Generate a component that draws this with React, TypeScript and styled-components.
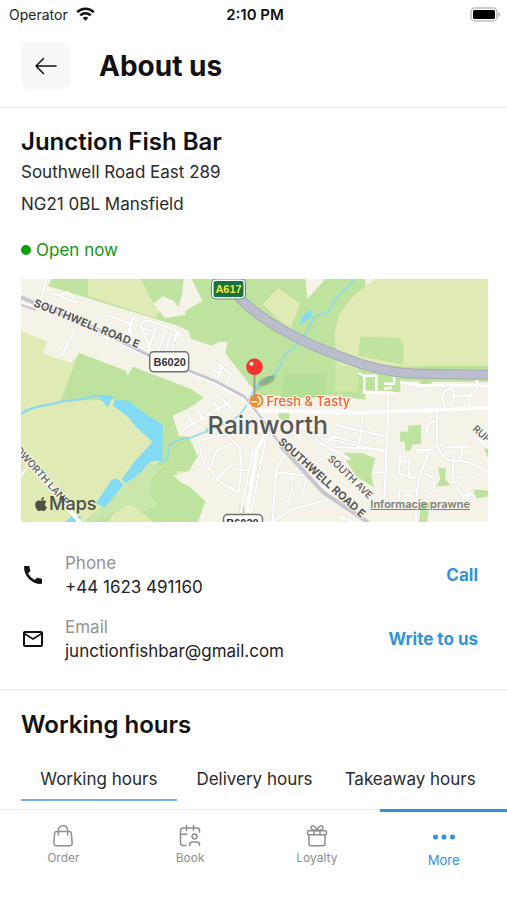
import React from "react";
import styled, { createGlobalStyle } from "styled-components";
import { MdCall, MdMailOutline } from "react-icons/md";
import { FaApple } from "react-icons/fa";

const GlobalStyle = createGlobalStyle`
  *, *::before, *::after { box-sizing: border-box; }
  body { margin: 0; background: #fff; }
  button { font: inherit; color: inherit; background: none; border: 0; padding: 0; margin: 0; cursor: pointer; }
  h1, h2, p, dl, dd, dt { margin: 0; }
`;

const blue = "#2f93dc";

const Screen = styled.div`
  min-height: 100vh;
  display: flex;
  flex-direction: column;
  background: #fff;
  color: #111;
  font-family: Inter, "Liberation Sans", sans-serif;
  font-size: 17px;
`;

const StatusBar = styled.div`
  display: grid;
  grid-template-columns: 1fr auto 1fr;
  align-items: center;
  height: 28px;
  padding: 0 6px 0 9px;
  font-size: 14px;
  color: #222;
`;

const Carrier = styled.span`
  display: flex;
  align-items: center;
  gap: 8px;
`;

const Clock = styled.span`
  font-size: 15px;
  font-weight: 600;
  color: #111;
`;

const BatteryIcon = styled.svg`
  justify-self: end;
`;

const Header = styled.header`
  display: flex;
  align-items: center;
  gap: 29px;
  height: 80px;
  padding: 0 21px 3px;
  border-bottom: 1px solid #e8e8e8;
`;

const BackButton = styled.button`
  display: grid;
  place-items: center;
  width: 49px;
  height: 48px;
  border-radius: 8px;
  background: #f8f8fb;
`;

const Title = styled.h1`
  font-size: 28px;
  line-height: 36px;
  font-weight: 700;
`;

const Section = styled.section`
  padding: 18px 19px 0 21px;
`;

const SectionTitle = styled.h2`
  font-size: 24px;
  line-height: 32px;
  font-weight: 600;
`;

const Address = styled.p`
  line-height: 32px;
  color: #2a2a2a;
  margin-top: -2px;
`;

const OpenState = styled.p`
  display: flex;
  align-items: center;
  gap: 5px;
  margin-top: 18px;
  line-height: 24px;
  color: #149414;

  &::before {
    content: "";
    width: 10px;
    height: 10px;
    border-radius: 50%;
    background: #08a008;
  }
`;

const MapFrame = styled.div`
  position: relative;
  margin-top: 17px;
`;

const MapDrawing = styled.svg`
  display: block;
  width: 100%;
  height: auto;
  font-family: Inter, sans-serif;
`;

const MapBrand = styled.span`
  position: absolute;
  left: 12px;
  bottom: 6px;
  display: flex;
  align-items: center;
  font-size: 18px;
  line-height: 24px;
  font-weight: 500;
  color: #4b5147;
`;

const LegalLink = styled.a`
  position: absolute;
  right: 18px;
  bottom: 10px;
  font-size: 11px;
  line-height: 16px;
  font-weight: 600;
  color: #80807a;
`;

const Contacts = styled.dl`
  padding: 29px 0 26px;
  display: grid;
  gap: 16px;
`;

const ContactRow = styled.div`
  display: grid;
  grid-template-columns: 24px 1fr auto;
  align-items: center;
  column-gap: 20px;
  padding-right: 10px;
`;

const ContactText = styled.div`
  line-height: 24px;
`;

const ContactLabel = styled.dt`
  color: #929292;
`;

const ContactValue = styled.dd`
  color: #222;
`;

const ContactAction = styled.a`
  color: ${blue};
  font-weight: 700;
  text-decoration: none;
`;

const HoursSection = styled(Section)`
  border-top: 2px solid #f3f3f3;
`;

const Tabs = styled.div`
  display: grid;
  grid-template-columns: repeat(3, 1fr);
  margin-top: 17px;
`;

const Tab = styled.button<{ $active?: boolean }>`
  height: 43px;
  white-space: nowrap;
  color: #2a2a2a;
  border-bottom: 2px solid ${(p) => (p.$active ? "#74b2e0" : "transparent")};
`;

const BottomNav = styled.nav`
  display: grid;
  grid-template-columns: repeat(4, 1fr);
  margin-top: auto;
  padding-bottom: 27px;
  box-shadow: inset 0 1px #ebebeb;
`;

const NavItem = styled.button<{ $active?: boolean }>`
  display: flex;
  flex-direction: column;
  align-items: center;
  gap: ${(p) => (p.$active ? 3 : 1)}px;
  height: 64px;
  padding-top: 12px;
  border-top: 3px solid ${(p) => (p.$active ? blue : "transparent")};
  color: ${(p) => (p.$active ? blue : "#8e8e8e")};
  font-size: ${(p) => (p.$active ? 13 : 12)}px;
  line-height: 18px;
`;

const strokeProps = {
  fill: "none",
  stroke: "currentColor",
  strokeWidth: 1.5,
  strokeLinecap: "round" as const,
  strokeLinejoin: "round" as const,
};

const WifiIcon = () => (
  <svg width="19" height="14" viewBox="0 0 19 14" fill="none" stroke="#111" strokeWidth="2.6">
    <path d="M1.2 5.2C5.8.6 13.2.6 17.8 5.2" />
    <path d="M4.3 8.4c2.9-2.8 7.5-2.8 10.4 0" />
    <path d="M6.7 10.9c1.6-1.5 4-1.5 5.6 0L9.5 13.8z" fill="#111" stroke="none" />
  </svg>
);

const Battery = () => (
  <BatteryIcon width="31" height="15" viewBox="0 0 31 15">
    <rect x="1" y="1" width="26" height="13" rx="4" fill="#fff" stroke="#bdbdbd" strokeWidth="1.5" />
    <rect x="3" y="3" width="22" height="9" rx="1.5" fill="#000" />
    <path d="M28.5 5v5c2-1 2-4 0-5z" fill="#aaa" />
  </BatteryIcon>
);

const ArrowIcon = () => (
  <svg width="24" height="20" viewBox="0 0 24 20" {...strokeProps}>
    <path d="M22 10H2M9.500 2.500L2 10l7.500 7.500" />
  </svg>
);

const BagIcon = () => (
  <svg width="22" height="24" viewBox="0 0 22 24" {...strokeProps}>
    <path d="M4.500 7.500h13c1.200 0 1.700.8 1.800 1.700l.9 9.800c.1 1.700-.9 2.700-2.400 2.700H4.200c-1.500 0-2.500-1-2.400-2.700l.9-9.800c.1-.9.6-1.700 1.800-1.700z" />
    <path d="M6.300 11V6.500C6.300 3.700 8.200 1.700 11 1.700s4.700 2 4.700 4.800V11" />
  </svg>
);

const BookIcon = () => (
  <svg width="24" height="24" viewBox="0 0 24 24" {...strokeProps}>
    <path d="M8 21.500H5c-1.500 0-2.500-1-2.500-2.500V6.500C2.500 5 3.500 4 5 4h14c1.500 0 2.500 1 2.500 2.500v1.800" />
    <path d="M8.500 1.500v5M15.500 1.500v5M2.500 10.300h6.300" />
    <circle cx="16.500" cy="12.500" r="2.400" />
    <path d="M11.700 21.500v-1c0-1.600 1-2.600 2.600-2.600h4.600c1.600 0 2.600 1 2.600 2.600v1" />
  </svg>
);

const GiftIcon = () => (
  <svg width="22" height="24" viewBox="0 0 22 24" {...strokeProps}>
    <rect x="1.500" y="6.700" width="19" height="4" rx="1" />
    <path d="M3 10.700v9c0 1.200.8 2 2 2h12c1.200 0 2-.8 2-2v-9M8 6.700v4M14 6.700v4" />
    <path d="M11 6.500C7.500 6.500 5 5.300 5 3.500c0-2.800 4.500-2.500 6 3 1.500-5.500 6-5.800 6-3 0 1.800-2.500 3-6 3z" />
  </svg>
);

const DotsIcon = () => (
  <svg width="24" height="24" viewBox="0 0 24 24" fill="currentColor">
    <circle cx="3.500" cy="13" r="2.500" />
    <circle cx="12" cy="13" r="2.500" />
    <circle cx="20.500" cy="13" r="2.500" />
  </svg>
);

const minorRoads = [
  "M46 279L40 298M50 293L59 296L75 303M59 296L66 292L76 302M74 328L61 356",
  "M110 316L130 324V334M130 324L133 317M130 324L126 338L115 334",
  "M147 347L154 332L140 328C139 324 143 320 150 321L176 331L172 351M155 328L148 350M164 331L158 352M170 333L164 354M142 330L147 344",
  "M95 332L103 336M108 335L105 343M98 332L94 341M122 338L142 349",
  "M175 332L182 336M179 331L176 338M213 361L221 367L216 384M221 367L230 374L226 384M222 374L211 371",
  "M181 431L229 402M187 414L193 426M196 407L202 420M214 403L219 412M222 399L234 413",
  "M198 440L202 461L219 482L238 493L241 467L239 448L225 434L202 440",
  "M211 463L216 451L231 444M216 480L225 470L232 465M238 470L250 471M242 429L249 438L260 431L259 414",
  "M256 412L252 433M266 434L261 461L250 514M253 448L240 514",
  "M286 451L276 470L272 522M276 473L308 476L333 496M292 476V490L287 503M306 480L301 499M326 457L307 469L305 476",
  "M271 523L291 510L328 500M275 428L295 434L309 416M300 425L320 443L350 460",
  "M305 416V428L320 438L335 441L384 452M335 425L390 438M363 413L359 444M388 411L386 459L384 500",
  "M335 447L386 450M326 443L333 437L356 443M374 473H384M388 392V411M437 410V446",
  "M427 435V426L432 422H437M437 446L430 450H416M430 450C425 460 424 466 419 477L416 500V522",
  "M437 446C441 456 446 461 453 461L470 463L488 472M445 447H470M463 447L460 461M453 462V478H474M478 426C474 437 477 440 487 445",
  "M400 451V461L398 474L415 479M398 462H409V476M424 474C433 476 435 481 434 490L427 498M399 502V491H417",
  "M453 481L464 499M462 499C465 493 472 493 475 498M468 493V510M426 510H444L461 505M340 517L355 523",
  "M445 408L442 398L444 392C449 387 455 389 454 396L451 406M470 407L468 396L477 390V380M454 396H472",
];

const RainworthMap = () => (
  <MapDrawing viewBox="20 279 468 244" role="img" aria-label="Map of Rainworth">
    <rect x="20" y="279" width="468" height="244" fill="#f5f2e8" />

    {/* Fields and woodland north of the town */}
    <path d="M51 279H365V400L335 396H258L225 354L227 342H218L212 346L190 339L188 331L178 326L47 286z" fill="#bde39f" />
    <path d="M87 279H140L150 299L160 309L155 318L87 296z" fill="#dfeab4" />
    <path d="M153 304L162 296L173 301L180 310L185 306V315L164 318z" fill="#f5f2e8" />
    <path d="M183 279H191L202 301L175 316L181 296z" fill="#f5f2e8" />
    <path d="M175 329L188 331L182 351L175 347z" fill="#f5f2e8" />
    <path d="M262 304L278 288L300 304L290 328L276 318z" fill="#dfeab4" />
    <path d="M305 279H325L307 299z" fill="#f5f2e8" />
    <path d="M375 279H488V382H338L334 334L339 314L355 294z" fill="#dfeab4" />
    <path d="M335 365L358 368V392H335z" fill="#cfe7a7" />
    <path d="M360 337L399 338L403 344V365L358 356z" fill="#c0e39f" />
    <path d="M285 374H325V398H280z" fill="#b3df96" />
    <path d="M358 362L405 367L430 366L488 366V382H432V385L420 384L419 381H400V392L358 394z" fill="#bde39b" />

    {/* Farmland and woods to the west */}
    <path d="M20 331L46 342L42 354L70 363L76 357L164 421L185 447V523H20z" fill="#dfeab4" />
    <path d="M78 353L125 371L127 376L132 367L190 389L203 398L187 410L174 417L181 436L188 437L197 457L188 472H175L179 480L190 488L205 502L197 523H83L125 485L158 463L157 430L116 400L60 401L70 374z" fill="#bde39f" />
    <path d="M125 485L150 464L163 467L151 478L148 493L157 506L139 514L118 509L107 517L89 522L83 523z" fill="#c9e7ac" />
    <path d="M107 522C113 513 122 507 130 505L154 523z" fill="#dfeab4" />
    <path d="M172 416L187 409L203 399L210 400L179 426L182 437L178 436z" fill="#f5f2e8" />
    <path d="M173 476L188 472L190 488L179 482z" fill="#f5f2e8" />

    {/* Parks inside the town */}
    <path d="M278 413H289V419L283 421L278 418z" fill="#bde39f" />
    <path d="M408 426L421 425V444L412 445L410 451H405V442H400V432H408z" fill="#bde39f" />
    <path d="M344 453L363 454L375 459L371 475L374 488L356 477L347 463z" fill="#bde39f" />
    <path d="M438 468L446 469L445 480L451 486L436 487L440 480z" fill="#bde39f" />
    <path d="M474 490L488 491V497L475 499zM484 449H488V458zM421 503H430L427 523H419z" fill="#bde39f" />
    <path d="M239 507H244V514H239zM205 427L209 430L205 435z" fill="#bde39f" />

    {/* Water */}
    <g fill="none" stroke="#8bd9ef" strokeWidth="1.500">
      <path d="M20 414C34 405 43 407 56 403S80 402 93 396L113 397" strokeWidth="2.200" />
      <path d="M355 279L335 299L328 312L315 316L305 334C302 346 284 350 281 361C279 374 268 379 258 384L249 398C243 414 237 418 225 424L190 438C175 440 168 443 168 450C167 457 169 461 160 463" />
    </g>
    <path d="M98 397L112 396L110 401L107 408zM114 400L128 401L143 413L162 425V461L150 462L139 474L125 484L121 480L132 464L152 442L138 430L127 417L112 406zM111 480L116 479L123 485L104 508L95 504zM64 523L71 516L81 517L77 523zM299 325L301 317L310 309L312 317L305 321z" fill="#83dcf4" />

    {/* Streets: a grey casing under a white line */}
    <g fill="none" stroke="#e3e1dd" strokeWidth="3" strokeLinejoin="round">
      {minorRoads.map((d) => <path key={d} d={d} />)}
    </g>
    <g fill="none" stroke="#fff" strokeWidth="2" strokeLinejoin="round">
      {minorRoads.map((d) => <path key={d} d={d} />)}
      <path d="M358 373L364 376H376V393H364V377M384 384H394V377M392 388L384 389M362 392L394 393M400 382L420 386L433 385L487 386" strokeWidth="2.500" />
      <path d="M252 411L360 413L488 408M266 434L256 450L247 512" strokeWidth="3.500" />
      <path d="M20 451L79 523" strokeWidth="4" />
      <path d="M20 476L30 463" />
    </g>
    <g fill="none" stroke="#c6c7d2" strokeWidth="4">
      <path d="M20 297L42 307L95 329L148 356L190 372L215 382L243 397L258 416L279 445L323 493L368 523" />
      <path d="M20 305L35 310" strokeWidth="2" />
    </g>
    <path d="M20 302L42 309L95 332L148 358L190 374L215 384L243 399L258 418L279 447" fill="none" stroke="#fff" strokeWidth="1.500" />
    <path d="M225 279C240 306 270 325 309 344C350 361 381 374 420 374L488 375" fill="none" stroke="#a6a8b8" strokeWidth="10" />
    <path d="M225 279C240 306 270 325 309 344C350 361 381 374 420 374L488 375" fill="none" stroke="#bbbfcd" strokeWidth="8" />

    {/* Street names */}
    <g fill="#5a5957" stroke="#f7f5ee" strokeWidth="2" paintOrder="stroke" fontSize="11" fontWeight="700">
      <text transform="translate(32 306) rotate(22)">SOUTHWELL ROAD E</text>
      <text transform="translate(277 443) rotate(42)">SOUTHWELL ROAD E</text>
      <text transform="translate(327 460) rotate(44)" fontSize="10" fontWeight="500">SOUTH AVE</text>
      <text transform="translate(472 430) rotate(42)" fontSize="10" fontWeight="500">RUF</text>
      <text transform="translate(14 451) rotate(48)" fontSize="10" fontWeight="500">DWORTH LANE</text>
    </g>
    <text x="207" y="434" fontSize="25" fontWeight="500" fill="#555755" stroke="#f7f5ee" strokeWidth="2" paintOrder="stroke">Rainworth</text>

    {/* Road number signs */}
    <g fontFamily="'Liberation Sans', sans-serif" fontWeight="700" fontSize="11" textAnchor="middle">
      <rect x="211" y="279" width="34" height="20" rx="4" fill="#fff" stroke="#5c8b6b" />
      <rect x="213" y="281" width="30" height="16" rx="2" fill="#17733d" />
      <text x="228" y="293" fill="#f4e53d">A617</text>
      <rect x="149" y="352" width="39" height="20" rx="4" fill="#fff" stroke="#70716f" strokeWidth="1.500" />
      <text x="169" y="366" fill="#333">B6020</text>
      <rect x="223" y="515" width="39" height="20" rx="4" fill="#fff" stroke="#70716f" strokeWidth="1.500" />
      <text x="242" y="528" fill="#333">B6020</text>
    </g>

    {/* Restaurant marker and the dropped pin */}
    <circle cx="256" cy="401" r="7.500" fill="#f28d2d" stroke="#fff" strokeWidth=".8" />
    <path d="M251 402H257M257 397C261 398 261 404 257 405" fill="none" stroke="#fff" strokeWidth="1.500" />
    <text x="266" y="406" fontSize="13" fontWeight="500" fill="#e96b35" stroke="#fff8ef" strokeWidth="2" paintOrder="stroke">Fresh &amp; Tasty</text>
    <path d="M255 390L275 375" stroke="#4c663e" strokeOpacity=".12" strokeWidth="4" />
    <ellipse cx="266" cy="381" rx="9" ry="4" transform="rotate(-22 266 381)" fill="#4c663e" opacity=".3" />
    <path d="M254 374V400" stroke="#9a9a98" strokeWidth="2" />
    <circle cx="254" cy="367" r="8.300" fill="#f5332f" />
    <circle cx="251" cy="364" r="2" fill="#fff" opacity=".9" />
  </MapDrawing>
);

export default function App() {
  return (
    <Screen>
      <GlobalStyle />
      <StatusBar>
        <Carrier>Operator <WifiIcon /></Carrier>
        <Clock>2:10 PM</Clock>
        <Battery />
      </StatusBar>
      <Header>
        <BackButton aria-label="Back"><ArrowIcon /></BackButton>
        <Title>About us</Title>
      </Header>
      <main>
        <Section>
          <SectionTitle>Junction Fish Bar</SectionTitle>
          <Address>Southwell Road East 289<br />NG21 0BL Mansfield</Address>
          <OpenState>Open now</OpenState>
          <MapFrame>
            <RainworthMap />
            <MapBrand><FaApple size={16} />Maps</MapBrand>
            <LegalLink href="#legal">Informacje prawne</LegalLink>
          </MapFrame>
          <Contacts>
            <ContactRow>
              <MdCall size={24} />
              <ContactText>
                <ContactLabel>Phone</ContactLabel>
                <ContactValue>+44 1623 491160</ContactValue>
              </ContactText>
              <ContactAction href="tel:+441623491160">Call</ContactAction>
            </ContactRow>
            <ContactRow>
              <MdMailOutline size={24} />
              <ContactText>
                <ContactLabel>Email</ContactLabel>
                <ContactValue>junctionfishbar@gmail.com</ContactValue>
              </ContactText>
              <ContactAction href="mailto:junctionfishbar@gmail.com">Write to us</ContactAction>
            </ContactRow>
          </Contacts>
        </Section>
        <HoursSection>
          <SectionTitle>Working hours</SectionTitle>
          <Tabs role="tablist">
            <Tab role="tab" aria-selected $active>Working hours</Tab>
            <Tab role="tab" aria-selected={false}>Delivery hours</Tab>
            <Tab role="tab" aria-selected={false}>Takeaway hours</Tab>
          </Tabs>
        </HoursSection>
      </main>
      <BottomNav>
        <NavItem><BagIcon />Order</NavItem>
        <NavItem><BookIcon />Book</NavItem>
        <NavItem><GiftIcon />Loyalty</NavItem>
        <NavItem $active aria-current="page"><DotsIcon />More</NavItem>
      </BottomNav>
    </Screen>
  );
}
